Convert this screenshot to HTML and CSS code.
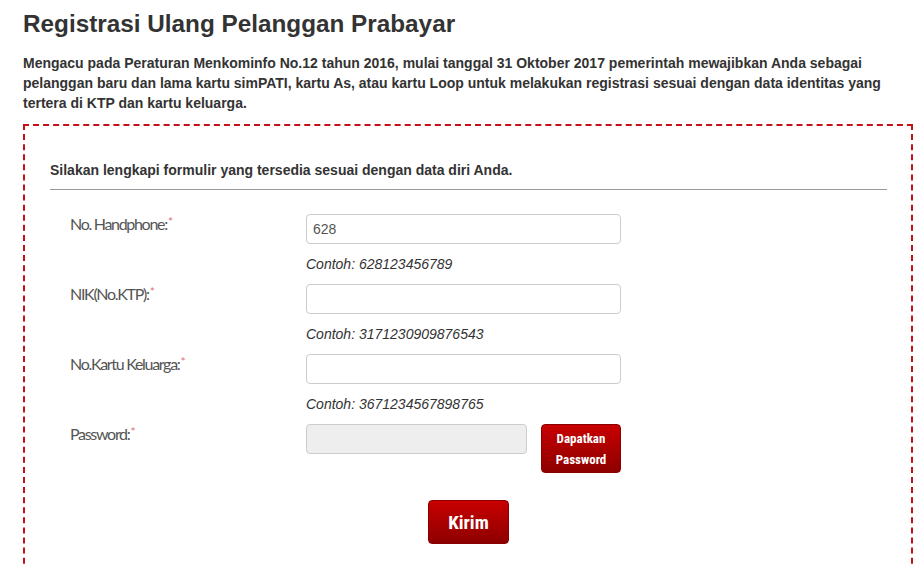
FILE: index.html
```html
<!DOCTYPE html>
<html lang="id">
<head>
<meta charset="utf-8">
<title>Registrasi Ulang Pelanggan Prabayar</title>
<link rel="stylesheet" href="styles.css">
</head>
<body>
<div class="page">
  <h1 class="title">Registrasi Ulang Pelanggan Prabayar</h1>
  <p class="intro">Mengacu pada Peraturan Menkominfo No.12 tahun 2016, mulai tanggal 31 Oktober 2017 pemerintah mewajibkan Anda sebagai pelanggan baru dan lama kartu simPATI, kartu As, atau kartu Loop untuk melakukan registrasi sesuai dengan data identitas yang tertera di KTP dan kartu keluarga.</p>
  <div class="box">
    <h3 class="box-head">Silakan lengkapi formulir yang tersedia sesuai dengan data diri Anda.</h3>
    <form class="form">
      <div class="row">
        <label class="label">No. Handphone:<span class="req">*</span></label>
        <div class="field">
          <input class="input" type="text" value="628">
          <div class="hint">Contoh: 628123456789</div>
        </div>
      </div>
      <div class="row">
        <label class="label">NIK(No.KTP):<span class="req">*</span></label>
        <div class="field">
          <input class="input" type="text">
          <div class="hint">Contoh: 3171230909876543</div>
        </div>
      </div>
      <div class="row">
        <label class="label">No.Kartu Keluarga:<span class="req">*</span></label>
        <div class="field">
          <input class="input" type="text">
          <div class="hint">Contoh: 3671234567898765</div>
        </div>
      </div>
      <div class="row">
        <label class="label">Password:<span class="req">*</span></label>
        <div class="field field-inline">
          <input class="input input-pass" type="text" disabled>
          <button type="button" class="btn btn-get">Dapatkan<br>Password</button>
        </div>
      </div>
      <div class="submit-row">
        <button type="button" class="btn btn-send">Kirim</button>
      </div>
    </form>
  </div>
</div>
</body>
</html>
```
FILE: styles.css
```css
html, body {
  margin: 0;
  padding: 0;
  background: #fff;
}
body {
  font-family: "Liberation Sans", Arial, sans-serif;
  color: #333;
}
.page {
  width: 890px;
  padding-left: 23px;
}
.title {
  margin: 9px 0 0;
  font-size: 24.3px;
  line-height: 30px;
  font-weight: bold;
  color: #333;
}
.intro {
  margin: 14px 0 11px;
  font-size: 14px;
  line-height: 20px;
  font-weight: bold;
  color: #333;
}
.box {
  border: 2px dashed #c41018;
  border-bottom: none;
  padding: 34px 24px 60px 25px;
}
.box-head {
  margin: 0;
  font-size: 14px;
  line-height: 20px;
  font-weight: bold;
  color: #333;
  padding-bottom: 9px;
  border-bottom: 1px solid #999;
}
.form {
  margin-top: 24px;
}
.row {
  display: flex;
  align-items: flex-start;
}
.label {
  flex: 0 0 256px;
  box-sizing: border-box;
  padding-left: 20px;
  font-family: Lato, "Open Sans", sans-serif;
  font-size: 16px;
  letter-spacing: -1.3px;
  line-height: 20px;
  color: #555;
}
.req {
  color: #d0404a;
  font-size: 12px;
  vertical-align: top;
  position: relative;
  top: -2px;
  margin-left: 1px;
  opacity: 0.75;
}
.field {
  display: flex;
  flex-direction: column;
}
.field-inline {
  flex-direction: row;
  align-items: flex-start;
  gap: 14px;
}
.input {
  box-sizing: border-box;
  width: 315px;
  height: 30px;
  margin: 0;
  padding: 0 6px;
  border: 1px solid #ccc;
  border-radius: 4px;
  background: #fff;
  font-family: "Liberation Sans", Arial, sans-serif;
  font-size: 14px;
  color: #555;
  outline: none;
}
.input-pass {
  width: 221px;
  background: #eee;
}
.hint {
  margin: 10px 0;
  font-size: 14px;
  line-height: 20px;
  font-style: italic;
  color: #333;
}
.btn {
  box-sizing: border-box;
  margin: 0;
  border: 1px solid #8a0000;
  border-radius: 4px;
  background: linear-gradient(to bottom, #c80000 0%, #8d0000 100%);
  color: #fff;
  font-family: "Liberation Sans Narrow", "Roboto Condensed", Roboto, sans-serif;
  font-weight: bold;
  cursor: pointer;
}
.btn-get {
  width: 80px;
  height: 49px;
  padding: 0;
  font-size: 13px;
  line-height: 21px;
}
.submit-row {
  display: flex;
  justify-content: center;
  margin-top: 27px;
}
.btn-send {
  width: 81px;
  height: 44px;
  padding: 0;
  font-size: 19px;
}
```
